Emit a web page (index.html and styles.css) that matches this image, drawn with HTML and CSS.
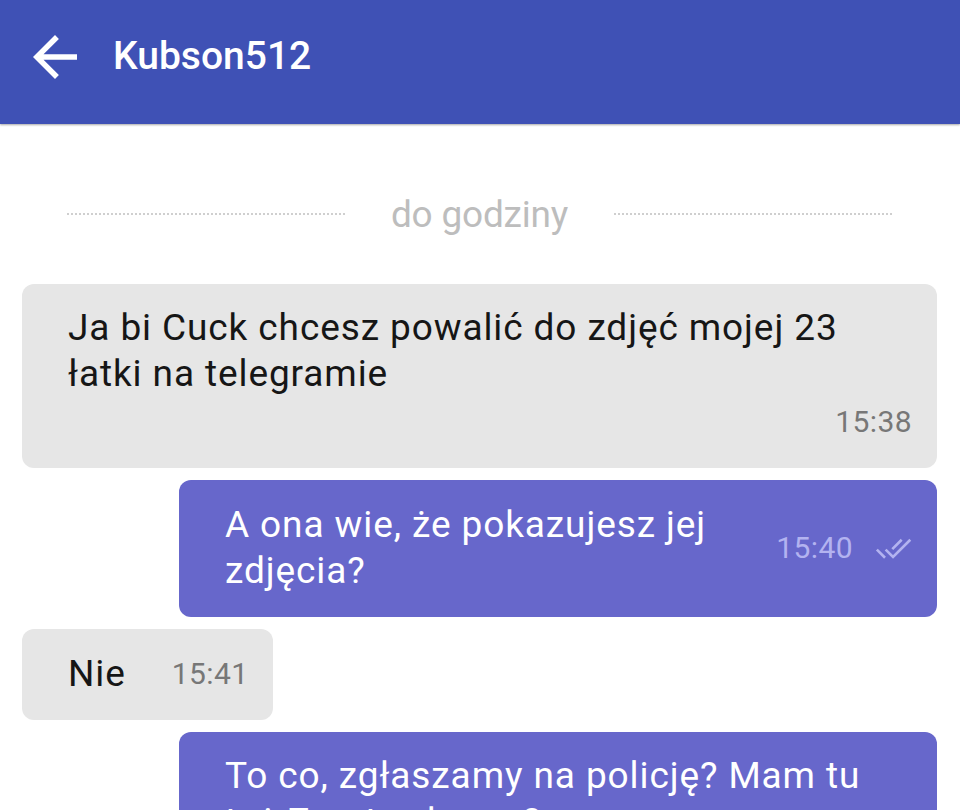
FILE: index.html
```html
<!DOCTYPE html>
<html lang="pl">
<head>
    <meta charset="UTF-8">
    <meta name="viewport" content="width=device-width, initial-scale=1.0">
    <title>Kubson512</title>
    <link rel="stylesheet" href="styles.css">
</head>
<body>
    <div class="app">
        <header class="toolbar">
            <button class="back-btn" aria-label="Wstecz">
                <svg viewBox="0 0 24 24" width="66" height="66">
                    <path d="M20 11H7.83l5.59-5.59L12 4l-8 8 8 8 1.41-1.41L7.83 13H20v-2z" fill="#fff"/>
                </svg>
            </button>
            <div class="toolbar-title">Kubson512</div>
        </header>

        <main class="chat">
            <div class="date-divider">
                <span class="divider-line"></span>
                <span class="divider-label">do godziny</span>
                <span class="divider-line"></span>
            </div>

            <div class="bubble incoming stacked">
                <div class="bubble-text">Ja bi Cuck chcesz powalić do zdjęć mojej 23 łatki na telegramie</div>
                <div class="bubble-meta">
                    <span class="time">15:38</span>
                </div>
            </div>

            <div class="bubble outgoing">
                <div class="bubble-text">A ona wie, że pokazujesz jej zdjęcia?</div>
                <div class="bubble-meta">
                    <span class="time">15:40</span>
                    <svg class="ticks" viewBox="0 0 24 24" width="37" height="37">
                        <path d="M1.2 12.7L6.5 18M6.9 12.7L11.7 17.5L22.9 6.3M17.3 6.3L11.2 12.4" fill="none" stroke="currentColor" stroke-width="1.7"/>
                    </svg>
                </div>
            </div>

            <div class="bubble incoming">
                <div class="bubble-text">Nie</div>
                <div class="bubble-meta">
                    <span class="time">15:41</span>
                </div>
            </div>

            <div class="bubble outgoing stacked">
                <div class="bubble-text">To co, zgłaszamy na policję? Mam tu też Zrzuty ekranu?</div>
                <div class="bubble-meta">
                    <span class="time">15:42</span>
                </div>
            </div>
        </main>
    </div>
</body>
</html>
```

FILE: styles.css
```css
/* Reset */
* {
    margin: 0;
    padding: 0;
    box-sizing: border-box;
}

body {
    font-family: Roboto, 'Noto Sans', sans-serif;
    background: #fff;
    height: 100vh;
    overflow: hidden;
}

.app {
    width: 960px;
    height: 810px;
    overflow: hidden;
    display: flex;
    flex-direction: column;
}

/* Toolbar */
.toolbar {
    height: 124px;
    flex-shrink: 0;
    background-color: #3f51b5;
    box-shadow: 0 1px 2px rgba(0, 0, 0, 0.35);
    display: flex;
    align-items: center;
    padding-left: 22px;
    position: relative;
    z-index: 1;
}

.back-btn {
    background: none;
    border: none;
    display: flex;
    margin-top: -10px;
}

.toolbar-title {
    color: #fff;
    font-size: 39px;
    font-weight: 500;
    margin-left: 25px;
    margin-top: -12px;
}

/* Chat list */
.chat {
    display: flex;
    flex-direction: column;
    gap: 12px;
    padding: 67px 23px 0 22px;
}

.date-divider {
    display: flex;
    align-items: center;
    justify-content: center;
    gap: 46px;
    height: 46px;
    margin: 0 45px 35px;
}

.divider-line {
    flex: 1;
    border-top: 2px dotted #cfcfcf;
}

.divider-label {
    color: #bdbdbd;
    font-size: 37px;
    letter-spacing: -0.2px;
}

/* Bubbles */
.bubble {
    display: flex;
    align-items: center;
    border-radius: 12px;
    padding: 22px 25px 23px 46px;
    font-size: 37px;
    letter-spacing: 0.9px;
    line-height: 46px;
}

.bubble.stacked {
    flex-direction: column;
    align-items: stretch;
    padding-top: 21px;
}

.bubble.incoming {
    align-self: flex-start;
    background-color: #e6e6e6;
    color: #161616;
}

.bubble.outgoing {
    align-self: stretch;
    margin-left: 157px;
    background-color: #6767cb;
    color: #fff;
}

.bubble-text {
    flex: 1;
}

.bubble-meta {
    display: flex;
    align-items: center;
    justify-content: flex-end;
    gap: 22px;
    margin-left: 46px;
    font-size: 30px;
    letter-spacing: 0.4px;
}

.stacked .bubble-meta {
    margin-left: 0;
    margin-top: 2px;
}

.incoming .time {
    color: #777;
}

.outgoing .time {
    color: #b3b3f0;
}

.ticks {
    color: #b3b3f0;
    display: block;
}
```
